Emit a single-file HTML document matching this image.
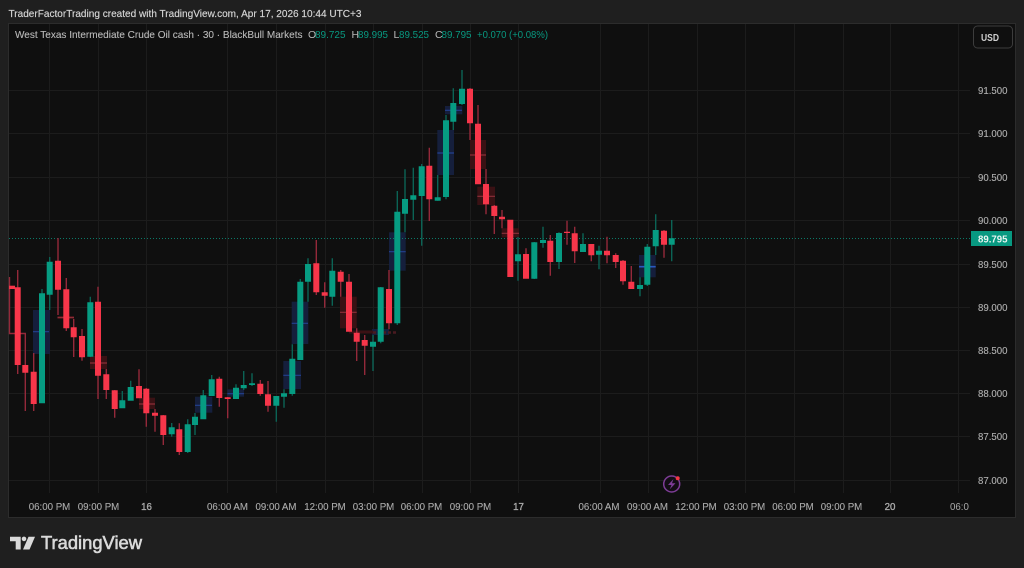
<!DOCTYPE html>
<html><head><meta charset="utf-8"><style>
html,body{margin:0;padding:0;background:#1f1f1f;width:1024px;height:568px;overflow:hidden}
svg{display:block}
text{font-family:"Liberation Sans",sans-serif}
</style></head><body>
<svg width="1024" height="568" viewBox="0 0 1024 568" xmlns="http://www.w3.org/2000/svg">
<rect width="1024" height="568" fill="#1f1f1f"/>
<text x="8.5" y="17" font-size="10.5" fill="#d6d6d6" stroke="#d6d6d6" stroke-width=".15" textLength="353" lengthAdjust="spacingAndGlyphs">TraderFactorTrading created with TradingView.com, Apr 17, 2026 10:44 UTC+3</text>
<rect x="8.5" y="23.5" width="1007" height="494" fill="#0f0f0f" stroke="#2c2c2c" stroke-width="1"/>
<!-- grid -->
<path d="M9 90.5H970M9 133.5H970M9 177.5H970M9 220.5H970M9 264.5H970M9 307.5H970M9 350.5H970M9 393.5H970M9 436.5H970M9 480.5H970M49.5 24V493M98.5 24V493M146.5 24V493M227.5 24V493M276.5 24V493M325.5 24V493M373.5 24V493M422.5 24V493M470.5 24V493M518.5 24V493M600.5 24V493M648.5 24V493M697.5 24V493M745.5 24V493M794.5 24V493M843.5 24V493M890.5 24V493M958.5 24V493" stroke="#1c1c1c" stroke-width="1" fill="none"/>
<!-- zones -->
<g fill="#16203f" opacity=".95">
<rect x="33" y="310" width="17" height="44"/><rect x="195" y="396.7" width="17.3" height="16"/><rect x="227.3" y="389.3" width="16.7" height="7.4"/><rect x="283.3" y="361" width="17.7" height="28"/><rect x="291.7" y="301.7" width="16.6" height="42.3"/><rect x="389" y="232.3" width="16.7" height="38.4"/><rect x="437.3" y="130" width="16.7" height="45"/><rect x="445" y="106" width="17.3" height="8.3"/><rect x="639" y="255" width="16.7" height="22.3"/><rect x="372" y="329" width="17" height="6"/>
</g>
<g fill="#3a1114">
<rect x="57.5" y="316" width="16.5" height="3"/><rect x="90" y="356" width="17" height="13"/><rect x="139" y="397.7" width="16" height="11.3"/><rect x="340" y="296.7" width="16.7" height="31.6"/><rect x="470" y="140" width="16" height="29"/><rect x="477.3" y="186.7" width="17.7" height="18.3"/><rect x="501.7" y="228.3" width="17.3" height="9"/><rect x="349" y="330.5" width="24" height="3"/>
</g>
<path d="M373 332.5H398" stroke="#4a1a20" stroke-width="2.5" stroke-dasharray="3 2" fill="none"/>
<path d="M33 331.7H49M195 405.3H212M227.3 393.7H244M283.3 375.3H301M291.7 323.3H308M389 251.7H405.7M437.3 153H454M445 110.3H462" stroke="#23408f" stroke-width="1.2" fill="none"/>
<path d="M639 266.7H655.7" stroke="#2a58c0" stroke-width="1.6" fill="none"/>
<path d="M57.5 317.5H74M90 363H107M139 404H155M340 312.3H356.7M470 155H486M477.3 196.3H495M501.7 233.3H519" stroke="#8c2f38" stroke-width="1.2" fill="none"/>
<!-- price line -->
<path d="M9 238.5H970" stroke="#0b7a68" stroke-width="1" stroke-dasharray="1 2" fill="none"/>
<!-- red wicks -->
<path d="M9.5 277V333.5H25.3V411M17.7 270V374M33.7 353V411M58 238V315M66.3 278V331M73.7 319V357M82 329V360.7M98 286.7V399M106.3 369V399M114.7 390V417.7M139 369.3V398M146.3 388V426.7M155 409V431.7M163.3 415V445M179.3 423.3V455M219.3 376.7V406.7M227.7 397V418.3M260.3 380V395.7M268 381V411.7M316.3 240V295M324.7 282.3V307.7M340.7 270V296.7M349 274V331M356.7 328.3V361M364.7 335V375M389 270V329.3M429.3 147.7V221M470 88V140M478 105V184M486 169V214.3M494.3 205V234M502 210V228.3M526 248.3V278M550.3 235V275.7M567 220.7V244.7M574.7 226.7V263M591.3 244V261.3M607 236.7V263.3M615.7 253.3V268M623 260V284.7M631.3 266V289M664 230V257.7" stroke="#94293a" stroke-width="1.4" fill="none"/>
<!-- green wicks -->
<path d="M42 289V403M49.7 257V310M90.3 296.7V357M122.3 391V408M130.7 380.7V400M171.7 423V436.7M187.7 419.3V453M195 413V435M203.3 390V419M211.7 375V396M236 384.3V399M243.7 371V390M252 373.3V386M276.3 396V421.7M284 389.3V407.7M292.3 344.3V395.7M300.3 279V360M308 258.3V301.7M332.3 258.3V305.7M373 335V371M380.7 287V343.3M397.3 191V325M405 169.3V232.3M413.3 167.7V220M421.7 164V245.7M437.7 175V200.7M446 115V199.3M453.3 88.3V130M462 70V105M518 237V280.7M534.3 242V279M543 226.7V247.7M559 232.3V269M583 233.3V252M599 245.7V269.3M640 277.3V296.3M647.3 244V286M655.7 214.3V255M671.7 220V261.3" stroke="#0b6355" stroke-width="1.4" fill="none"/>
<!-- red bodies -->
<path d="M12 285.7V289" stroke="#f7364a" stroke-width="6" fill="none" stroke-dasharray="none" transform="translate(0 0)"/>
<path d="M17.7 287.3V365M25.3 365V372.7M33.7 371.7V404M58 260.7V289.7M66.3 289.3V328.3M73.7 327.3V337.3M82 336V357.3M98 301.7V375.7M106.3 374.3V390M114.7 390.3V409M139 386V398.3M146.3 388.7V413.3M155 412.7V415.7M163.3 415.3V435M179.3 429.3V452M219.3 378.7V398M227.7 397.3V399M260.3 383.7V394M268 394.3V405.7M316.3 263.3V292.3M324.7 292.3V295.7M340.7 271.7V281.7M349 281.7V331.7M356.7 332.7V341.7M364.7 340V345.7M389 289V323.3M429.3 165.7V199.3M470 88.7V123.3M478 123.7V184.3M486 184V204.3M494.3 205.7V216M502 216.7V219.3M510.3 219.7V277M526 254V278.7M550.3 240.7V262M567 231.7V233M574.7 233.3V251.3M591.3 244V255.3M607 250.7V255.3M615.7 255V262M623 260.7V281.3M631.3 281.7V289M664 230.7V244.7" stroke="#f7364a" stroke-width="6" fill="none"/>
<!-- green bodies -->
<path d="M42 293.3V403.3M49.7 261.7V294.7M90.3 302.3V356.7M122.3 400.3V408.3M130.7 387V400.7M171.7 427.3V434.3M187.7 424.3V452M195 416.7V425M203.3 395.3V419.3M211.7 379.3V396M236 387.7V399M243.7 385V388.3M252 383.3V385M276.3 396V405.7M284 393.3V396.7M292.3 358.7V394M300.3 281.7V360M308 264V281.7M332.3 270.7V296.7M373 341.7V346.7M380.7 287.3V341.7M397.3 211.7V323.3M405 199V213.7M413.3 195.3V199.7M421.7 166.3V196M437.7 197.3V200.7M446 120.3V197M453.3 103V121.7M462 88.7V104M518 254.3V261.3M534.3 242.3V278.7M543 240V243M559 233V262M583 244V252M599 250.7V254.7M640 285V289M647.3 246.7V284.7M655.7 230V246.3M671.7 238.3V244.7" stroke="#069c82" stroke-width="6" fill="none"/>
<!-- legend -->
<text x="15" y="38" font-size="10.5" fill="#b8b8b8" stroke="#b8b8b8" stroke-width=".12" textLength="287.5" lengthAdjust="spacingAndGlyphs">West Texas Intermediate Crude Oil cash · 30 · BlackBull Markets</text>
<text x="308" y="38" font-size="10.5" fill="#b8b8b8">O</text><text x="315" y="38" font-size="10.5" fill="#089981" textLength="30.5" lengthAdjust="spacingAndGlyphs">89.725</text>
<text x="351.5" y="38" font-size="10.5" fill="#b8b8b8">H</text><text x="358" y="38" font-size="10.5" fill="#089981" textLength="30" lengthAdjust="spacingAndGlyphs">89.995</text>
<text x="393.5" y="38" font-size="10.5" fill="#b8b8b8">L</text><text x="399" y="38" font-size="10.5" fill="#089981" textLength="30" lengthAdjust="spacingAndGlyphs">89.525</text>
<text x="435" y="38" font-size="10.5" fill="#b8b8b8">C</text><text x="441.5" y="38" font-size="10.5" fill="#089981" textLength="30" lengthAdjust="spacingAndGlyphs">89.795</text>
<text x="477" y="38" font-size="10.5" fill="#089981" textLength="71" lengthAdjust="spacingAndGlyphs">+0.070 (+0.08%)</text>
<!-- USD -->
<rect x="973.5" y="26" width="39" height="22" rx="4" fill="#0f0f0f" stroke="#3c3c3c"/>
<text x="981" y="41" font-size="10" font-weight="bold" fill="#d0d0d0" textLength="18" lengthAdjust="spacingAndGlyphs">USD</text>
<!-- price axis -->
<g font-size="10.5" fill="#b0b0b0" stroke="#b0b0b0" stroke-width=".12">
<text x="978" y="94" textLength="29.5" lengthAdjust="spacingAndGlyphs">91.500</text><text x="978" y="137" textLength="29.5" lengthAdjust="spacingAndGlyphs">91.000</text><text x="978" y="181" textLength="29.5" lengthAdjust="spacingAndGlyphs">90.500</text><text x="978" y="224" textLength="29.5" lengthAdjust="spacingAndGlyphs">90.000</text><text x="978" y="268" textLength="29.5" lengthAdjust="spacingAndGlyphs">89.500</text><text x="978" y="311" textLength="29.5" lengthAdjust="spacingAndGlyphs">89.000</text><text x="978" y="354" textLength="29.5" lengthAdjust="spacingAndGlyphs">88.500</text><text x="978" y="397" textLength="29.5" lengthAdjust="spacingAndGlyphs">88.000</text><text x="978" y="440" textLength="29.5" lengthAdjust="spacingAndGlyphs">87.500</text><text x="978" y="484" textLength="29.5" lengthAdjust="spacingAndGlyphs">87.000</text>
</g>
<rect x="971" y="231" width="41" height="15" fill="#089981"/>
<text x="978" y="242.5" font-size="10.5" font-weight="bold" fill="#e8f5f2" textLength="29.5" lengthAdjust="spacingAndGlyphs">89.795</text>
<!-- time axis -->
<g font-size="9.7" fill="#aaaaaa" stroke="#aaaaaa" stroke-width=".12" text-anchor="middle">
<text x="49.5" y="510">06:00 PM</text><text x="98.5" y="510">09:00 PM</text><text x="146.5" y="510" stroke-width=".35">16</text><text x="227.5" y="510">06:00 AM</text><text x="276" y="510">09:00 AM</text><text x="325" y="510">12:00 PM</text><text x="373.5" y="510">03:00 PM</text><text x="421.5" y="510">06:00 PM</text><text x="470.5" y="510">09:00 PM</text><text x="518.5" y="510" stroke-width=".35">17</text><text x="599" y="510">06:00 AM</text><text x="647.5" y="510">09:00 AM</text><text x="696" y="510">12:00 PM</text><text x="744.5" y="510">03:00 PM</text><text x="793" y="510">06:00 PM</text><text x="841.5" y="510">09:00 PM</text><text x="890" y="510" stroke-width=".35">20</text>
</g>
<text x="950" y="510" font-size="9.7" fill="#aaaaaa">06:0</text>
<rect x="970" y="498" width="6" height="18" fill="#0f0f0f"/>
<!-- lightning -->
<circle cx="671.7" cy="484" r="8" fill="#120d14" stroke="#7d3c96" stroke-width="1.5"/>
<path d="M673.5 479L668 485H671.5L669.8 489.3L675.5 483.2H672Z" fill="#7d3c96"/>
<circle cx="677.7" cy="478.3" r="2" fill="#f23645"/>
<!-- logo -->
<path d="M10 536.7H20.7V549.5H15.7V541.3H10Z" fill="#d9d9d9"/>
<circle cx="24" cy="538.9" r="2.3" fill="#d9d9d9"/>
<path d="M28.5 536.7H35L29.5 549.5H23Z" fill="#d9d9d9"/>
<text x="41" y="549" font-size="18.5" fill="#d9d9d9" stroke="#d9d9d9" stroke-width=".6" textLength="101" lengthAdjust="spacingAndGlyphs">TradingView</text>
</svg>
</body></html>
